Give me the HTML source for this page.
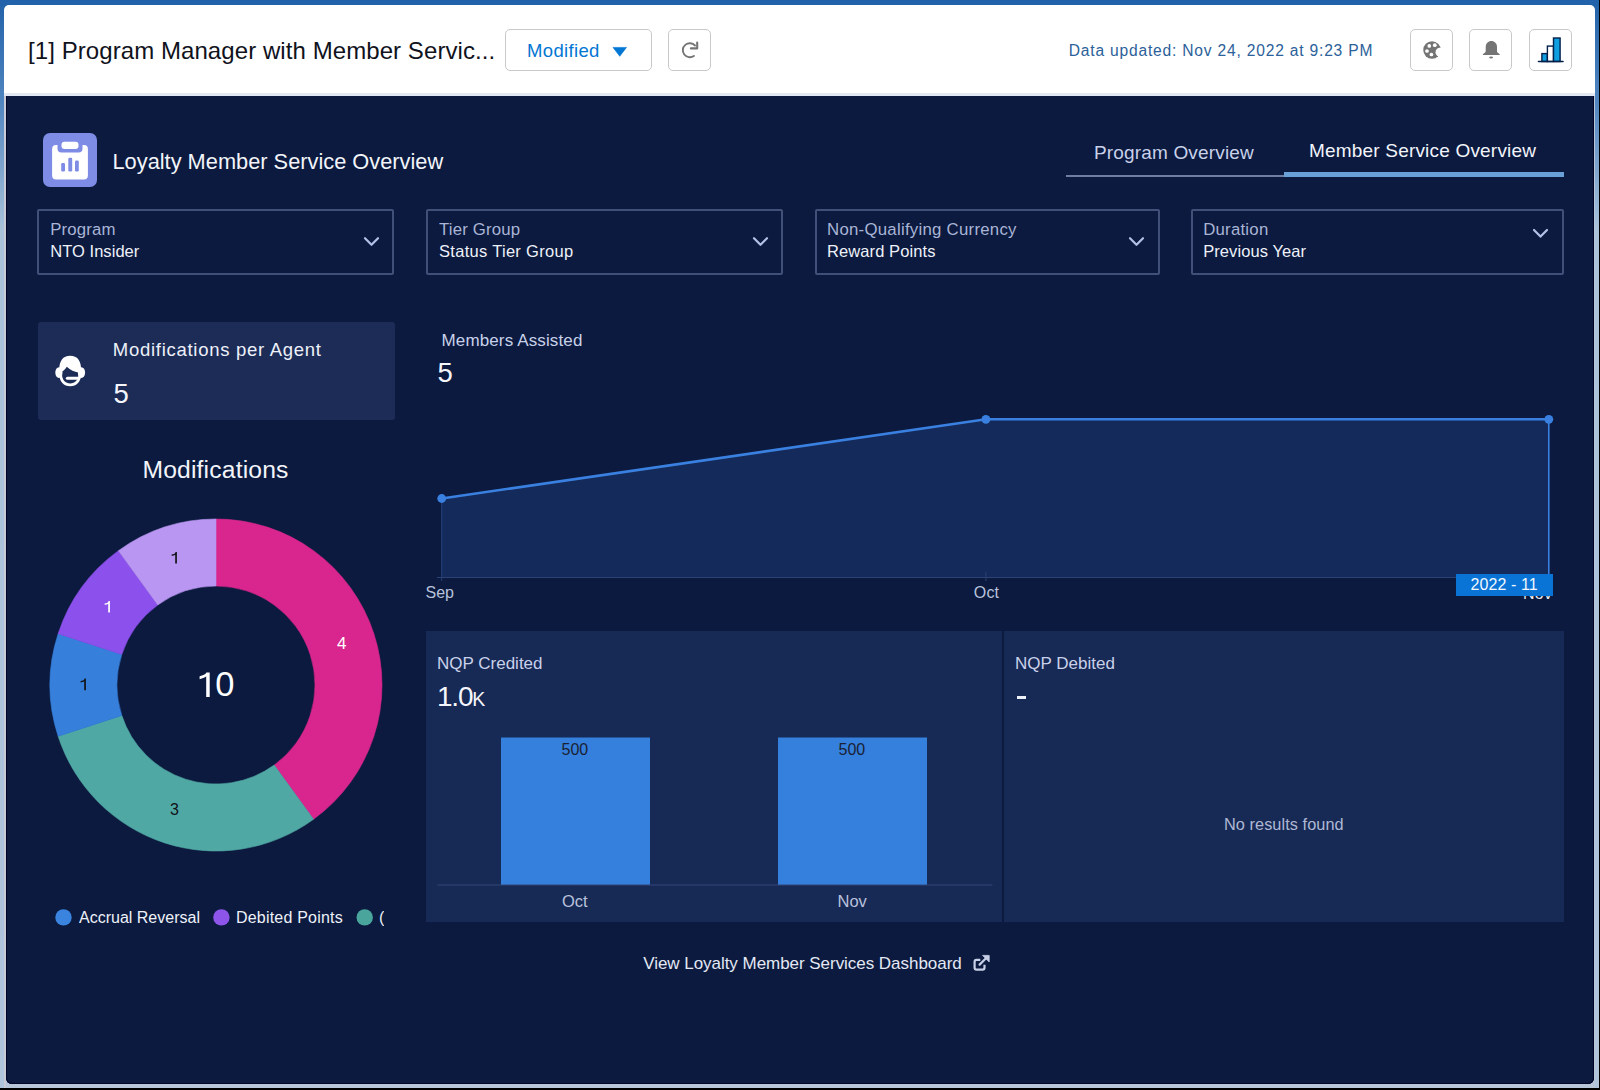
<!DOCTYPE html>
<html><head><meta charset="utf-8">
<style>
*{margin:0;padding:0;box-sizing:border-box}
html,body{width:1600px;height:1090px;overflow:hidden;background:#000}
body{position:relative;font-family:"Liberation Sans",sans-serif}
.a{position:absolute}
.t{position:absolute;white-space:nowrap;line-height:1}
#bgl{left:0;top:0;width:1599px;height:1088px;background:linear-gradient(#2262aa 0,#4f84bf 100px,#a9c2da 230px,#b0c4dc 1088px)}
#bgtop{left:0;top:0;width:1599px;height:6px;background:#2262aa}
#frame{left:4px;top:95px;width:1591px;height:993px;background:linear-gradient(90deg,#c8cad6 0,#c8cad6 2px,#b8c6da 2px)}
#hdr{left:4px;top:5px;width:1591px;height:88px;background:#fff;border-radius:5px 5px 0 0}
#hline{left:4px;top:93px;width:1591px;height:3px;background:#e3e9f3}
#panel{left:6px;top:96px;width:1588px;height:988px;background:#0b1a3e;border-radius:0 0 6px 6px;box-shadow:inset 1px 0 0 #000428, inset -1px 0 0 #000428, inset 0 -1px 0 #000428}
.btn{position:absolute;top:29px;height:42px;border:1px solid #c9c9c9;border-radius:5px;background:#fff}
.fbox{position:absolute;top:209px;height:65.6px;border:2px solid #415079;border-radius:2px}
.card{position:absolute;background:#172955}
</style></head>
<body>

<div class="a" id="bgl"></div>
<div class="a" id="bgtop"></div>
<div class="a" id="frame"></div>
<div class="a" id="hdr"></div>
<div class="a" id="hline"></div>
<div class="a" id="panel"></div>
<div class="btn" style="left:505px;width:147px"></div>
<div class="btn" style="left:668px;width:43px"></div>
<div class="btn" style="left:1410px;width:43px"></div>
<div class="btn" style="left:1469px;width:43px"></div>
<div class="btn" style="left:1529px;width:43px"></div>
<div class="a" style="left:43px;top:133px;width:54px;height:54px;border-radius:7px;background:#7f8ce6"></div>
<div class="a" style="left:1066px;top:175px;width:218px;height:2px;background:#6f7da2"></div>
<div class="a" style="left:1284px;top:172px;width:280px;height:5px;background:#6aa0d8"></div>
<div class="fbox" style="left:37.3px;width:357px"></div>
<div class="fbox" style="left:426px;width:357px"></div>
<div class="fbox" style="left:815px;width:345px"></div>
<div class="fbox" style="left:1190.8px;width:373.2px"></div>
<div class="card" style="left:38px;top:322.3px;width:356.5px;height:97.6px;border-radius:3px;background:#1c2c57"></div>
<div class="card" style="left:426px;top:631px;width:576px;height:291px"></div>
<div class="card" style="left:1004px;top:631px;width:560px;height:291px"></div>


<svg class="a" style="left:0;top:0" width="1600" height="1090" viewBox="0 0 1600 1090">
<path d="M216.00,519.00 A166,166 0 0 1 313.57,819.30 L274.19,765.09 A99,99 0 0 0 216.00,586.00 Z" fill="#d9268f" stroke="#d9268f" stroke-width="0.6" stroke-linejoin="round"/>
<path d="M313.57,819.30 A166,166 0 0 1 58.12,736.30 L121.85,715.59 A99,99 0 0 0 274.19,765.09 Z" fill="#50a8a4" stroke="#50a8a4" stroke-width="0.6" stroke-linejoin="round"/>
<path d="M58.12,736.30 A166,166 0 0 1 58.12,633.70 L121.85,654.41 A99,99 0 0 0 121.85,715.59 Z" fill="#3680dc" stroke="#3680dc" stroke-width="0.6" stroke-linejoin="round"/>
<path d="M58.12,633.70 A166,166 0 0 1 118.43,550.70 L157.81,604.91 A99,99 0 0 0 121.85,654.41 Z" fill="#8c50ec" stroke="#8c50ec" stroke-width="0.6" stroke-linejoin="round"/>
<path d="M118.43,550.70 A166,166 0 0 1 216.00,519.00 L216.00,586.00 A99,99 0 0 0 157.81,604.91 Z" fill="#b996f2" stroke="#b996f2" stroke-width="0.6" stroke-linejoin="round"/>
<polygon points="441.7,498.5 985.9,419.3 1548.8,419.3 1548.8,577.3 441.7,577.3" fill="#142a5a"/>
<line x1="437" y1="577.5" x2="1552" y2="577.5" stroke="#2b4272" stroke-width="1"/>
<line x1="441.7" y1="498.5" x2="441.7" y2="581" stroke="#25407a" stroke-width="1"/>
<line x1="985.9" y1="572" x2="985.9" y2="581" stroke="#2b4272" stroke-width="1"/>
<polyline points="441.7,498.5 985.9,419.3 1548.8,419.3" fill="none" stroke="#3a80e0" stroke-width="2.6"/>
<line x1="1548.8" y1="419.3" x2="1548.8" y2="580" stroke="#3a80e0" stroke-width="1.6"/>
<circle cx="441.7" cy="498.5" r="4.4" fill="#3a80e0"/>
<circle cx="985.9" cy="419.3" r="4.4" fill="#3a80e0"/>
<circle cx="1548.8" cy="419.3" r="4.4" fill="#3a80e0"/>
<rect x="501" y="737.5" width="149" height="147.5" fill="#3580dd"/>
<rect x="778" y="737.5" width="149" height="147.5" fill="#3580dd"/>
<line x1="437.5" y1="885" x2="992.5" y2="885" stroke="#34467a" stroke-width="1"/>
<circle cx="63.5" cy="917.4" r="8.2" fill="#3a84e0"/>
<circle cx="221.4" cy="917.4" r="8.2" fill="#8d55ea"/>
<circle cx="364.7" cy="917.4" r="8.2" fill="#4aa59c"/>
<polyline points="365,238.2 371.5,244.79999999999998 378,238.2" fill="none" stroke="#b4c0e8" stroke-width="2.2" stroke-linecap="round" stroke-linejoin="round"/><polyline points="754,238.2 760.5,244.79999999999998 767,238.2" fill="none" stroke="#b4c0e8" stroke-width="2.2" stroke-linecap="round" stroke-linejoin="round"/><polyline points="1130,238.2 1136.5,244.79999999999998 1143,238.2" fill="none" stroke="#b4c0e8" stroke-width="2.2" stroke-linecap="round" stroke-linejoin="round"/><polyline points="1534,230 1540.5,236.6 1547,230" fill="none" stroke="#b4c0e8" stroke-width="2.2" stroke-linecap="round" stroke-linejoin="round"/>

<!-- loyalty icon -->
<rect x="52.1" y="144.9" width="35.8" height="34.6" rx="4" fill="#fff"/>
<path d="M57.5,144 L57.5,148.5 Q57.5,152.5 61.5,152.5 L78.5,152.5 Q82.5,152.5 82.5,148.5 L82.5,144 Z" fill="#7f8ce6"/>
<rect x="61.5" y="141.8" width="17" height="7.2" rx="3" fill="#fff"/>
<rect x="61.2" y="163" width="3.8" height="8.5" rx="1.2" fill="#7f8ce6"/>
<rect x="68.3" y="157.8" width="3.9" height="13.7" rx="1.2" fill="#7f8ce6"/>
<rect x="75" y="160.5" width="3.8" height="11" rx="1.2" fill="#7f8ce6"/>
<!-- agent icon -->
<g fill="#fff">
<ellipse cx="58.9" cy="372.6" rx="3.6" ry="5.3"/>
<ellipse cx="81.5" cy="372.6" rx="3.6" ry="5.3"/>
<path fill-rule="evenodd" d="M59.2,371.5 C59,360.5 63,355.8 70.2,355.8 C77.4,355.8 81.4,360.5 81.2,371.5 L81.2,374 C81.2,381.5 76.5,386.3 70.2,386.3 C63.9,386.3 59.2,381.5 59.2,374 Z M62,371.5 L62,374 C62,380 65.5,383.5 70.2,383.5 C74.9,383.5 78.4,380 78.4,374 L78.4,372.6 C74.5,372 70.5,370 66.8,366.8 C65.5,369 64,370.6 62,371.5 Z"/>
<path d="M67.4,378.3 L78.6,378.3" stroke="#fff" stroke-width="3.1" stroke-linecap="round" fill="none"/>
</g>
<!-- palette -->
<circle cx="1432" cy="50" r="8.75" fill="#747474"/>
<circle cx="1439.9" cy="52.2" r="4.4" fill="#fff"/>
<circle cx="1429.3" cy="45.9" r="1.85" fill="#fff"/>
<circle cx="1434.8" cy="45.2" r="1.9" fill="#fff"/>
<circle cx="1427" cy="51" r="1.85" fill="#fff"/>
<circle cx="1431.4" cy="54.5" r="1.85" fill="#fff"/>
<!-- bell -->
<path d="M1485.7,53 L1485.7,47 C1485.7,43.5 1488.2,41 1491.35,41 C1494.5,41 1497,43.5 1497,47 L1497,53 Z" fill="#747474"/>
<path d="M1482.7,54.9 C1482.7,53.6 1485.4,53.2 1485.9,51.5 L1496.8,51.5 C1497.3,53.2 1499.9,53.6 1499.9,54.9 Z" fill="#747474"/>
<ellipse cx="1491.1" cy="57.5" rx="1.9" ry="0.95" fill="#747474"/>
<!-- chart icon -->
<g stroke="#03204a" stroke-width="1.4">
<rect x="1541.9" y="53.6" width="5.5" height="7.9" fill="#0e9fe0"/>
<rect x="1547.4" y="46.1" width="6.1" height="15.4" fill="#fff"/>
<rect x="1553.5" y="38" width="6.6" height="23.5" fill="#0e9fe0"/>
<line x1="1538.5" y1="61.5" x2="1563" y2="61.5" stroke-width="1.6" stroke-linecap="round"/>
</g>
<!-- refresh -->
<path d="M693.9,55.9 A7,7 0 1 1 695.0,45.5" fill="none" stroke="#747474" stroke-width="1.9" stroke-linecap="round"/>
<path d="M690.9,48.4 L697.2,48.4 L697.2,42.6" fill="none" stroke="#747474" stroke-width="2.1" stroke-linecap="round" stroke-linejoin="round"/>
<!-- external link -->
<path d="M980.3,959.9 L976.4,959.9 Q974.6,959.9 974.6,961.7 L974.6,967.8 Q974.6,969.6 976.4,969.6 L982.7,969.6 Q984.5,969.6 984.5,967.8 L984.5,964.8" fill="none" stroke="#c8d0e8" stroke-width="2.2"/>
<path d="M979.6,964.6 L986.5,957.7" stroke="#c8d0e8" stroke-width="2.2" stroke-linecap="round"/>
<path d="M982.6,955.4 L989.2,955.4 L989.2,962 Z" fill="#c8d0e8" stroke="#c8d0e8" stroke-width="0.8" stroke-linejoin="round"/>

<path d="M176.90,563.6 L176.90,552.00 L175.60,552.00 C175.10,553.80 173.40,554.40 171.60,554.50 L171.60,555.80 C173.00,555.80 174.30,555.30 175.20,554.70 L175.20,563.6 Z" fill="#111318"/>
<path d="M109.90,612.6 L109.90,601.00 L108.60,601.00 C108.10,602.80 106.40,603.40 104.60,603.50 L104.60,604.80 C106.00,604.80 107.30,604.30 108.20,603.70 L108.20,612.6 Z" fill="#ffffff"/>
<path d="M85.90,690.2 L85.90,678.60 L84.60,678.60 C84.10,680.40 82.40,681.00 80.60,681.10 L80.60,682.40 C82.00,682.40 83.30,681.90 84.20,681.30 L84.20,690.2 Z" fill="#111318"/>
<path d="M206.2,697 L206.2,672.6 L209.7,672.6 L209.7,697 Z M206.6,672.6 L209.2,672.6 C208,676.3 203.5,678.6 199.6,679.2 L199.6,676.2 C203,675.6 205.5,674.2 206.6,672.6 Z" fill="#fff"/>
<!-- caret -->
<polygon points="613,47.4 626.5,47.4 619.75,56.3" fill="#0176d3" stroke="#0176d3" stroke-width="0.6" stroke-linejoin="round"/>
</svg>

<div class="t" style="left:28.00px;top:38.68px;font-size:24px;color:#10121c;letter-spacing:0.075px;">[1] Program Manager with Member Servic...</div>
<div class="t" style="left:527.00px;top:42.14px;font-size:18.5px;color:#0176d3;letter-spacing:0.35px;">Modified</div>
<div class="t" style="left:1068.80px;top:42.99px;font-size:15.6px;color:#2c6199;letter-spacing:0.8px;">Data updated: Nov 24, 2022 at 9:23 PM</div>
<div class="t" style="left:112.50px;top:151.05px;font-size:21.8px;color:#f2f4fa;">Loyalty Member Service Overview</div>
<div class="t" style="left:1094.00px;top:142.72px;font-size:19px;color:#c9d1ea;letter-spacing:0.16px;">Program Overview</div>
<div class="t" style="left:1309.00px;top:141.22px;font-size:19px;color:#f2f4fb;letter-spacing:0.19px;">Member Service Overview</div>
<div class="t" style="left:50.20px;top:222.28px;font-size:16.8px;color:#a9b4d6;letter-spacing:0.15px;">Program</div>
<div class="t" style="left:50.20px;top:243.23px;font-size:16.5px;color:#eef1f9;letter-spacing:0.05px;">NTO Insider</div>
<div class="t" style="left:439.00px;top:222.28px;font-size:16.8px;color:#a9b4d6;letter-spacing:0.18px;">Tier Group</div>
<div class="t" style="left:439.00px;top:243.23px;font-size:16.5px;color:#eef1f9;letter-spacing:0.3px;">Status Tier Group</div>
<div class="t" style="left:827.00px;top:222.28px;font-size:16.8px;color:#a9b4d6;letter-spacing:0.26px;">Non-Qualifying Currency</div>
<div class="t" style="left:827.00px;top:243.23px;font-size:16.5px;color:#eef1f9;letter-spacing:0.09px;">Reward Points</div>
<div class="t" style="left:1203.20px;top:222.28px;font-size:16.8px;color:#a9b4d6;letter-spacing:0.23px;">Duration</div>
<div class="t" style="left:1203.20px;top:243.23px;font-size:16.5px;color:#eef1f9;letter-spacing:0.08px;">Previous Year</div>
<div class="t" style="left:112.80px;top:340.84px;font-size:18.5px;color:#eef1f9;letter-spacing:0.72px;">Modifications per Agent</div>
<div class="t" style="left:113.50px;top:380.32px;font-size:27.5px;color:#f5f6fb;">5</div>
<div class="t" style="left:142.50px;top:458.09px;font-size:24.7px;color:#f2f4fa;letter-spacing:0.15px;">Modifications</div>
<div class="t" style="left:441.50px;top:331.91px;font-size:17px;color:#c9d1ea;letter-spacing:0.13px;">Members Assisted</div>
<div class="t" style="left:437.50px;top:358.72px;font-size:27.5px;color:#f5f6fb;">5</div>
<div class="t" style="left:425.50px;top:584.76px;font-size:16px;color:#b9c2dc;">Sep</div>
<div class="t" style="left:973.80px;top:584.96px;font-size:16px;color:#b9c2dc;letter-spacing:0.15px;">Oct</div>
<div class="t" style="left:1523.00px;top:586.46px;font-size:16px;color:#e6eaf3;letter-spacing:0.3px;">Nov</div>
<div class="a" style="left:1456px;top:574px;width:97px;height:22px;background:#0a74d6"></div>
<div class="t" style="left:1470.40px;top:577.26px;font-size:16px;color:#f0f7ff;letter-spacing:0.1px;">2022 - 11</div>
<div class="t" style="left:437.00px;top:654.61px;font-size:17px;color:#c9d1ea;">NQP Credited</div>
<div class="t" style="left:437.00px;top:682.50px;font-size:28px;color:#f5f6fb;letter-spacing:-1.2px;">1.0<span style="font-size:19.5px;letter-spacing:0">K</span></div>
<div class="t" style="left:1015.00px;top:654.61px;font-size:17px;color:#c9d1ea;">NQP Debited</div>
<div class="a" style="left:1016.5px;top:696.3px;width:9.3px;height:2.6px;background:#eef1f9"></div>
<div class="t" style="left:1224.00px;top:815.80px;font-size:16.3px;color:#aeb8d4;letter-spacing:0.07px;">No results found</div>
<div class="t" style="left:561.50px;top:741.76px;font-size:16px;color:#1a1f33;">500</div>
<div class="t" style="left:838.50px;top:741.76px;font-size:16px;color:#1a1f33;">500</div>
<div class="t" style="left:562.00px;top:893.03px;font-size:16.5px;color:#b9c2dc;">Oct</div>
<div class="t" style="left:837.50px;top:893.03px;font-size:16.5px;color:#b9c2dc;">Nov</div>
<div class="t" style="left:79.00px;top:910.26px;font-size:16px;color:#eef1f9;">Accrual Reversal</div>
<div class="t" style="left:236.00px;top:910.26px;font-size:16px;color:#eef1f9;letter-spacing:0.2px;">Debited Points</div>
<div class="a" style="left:378px;top:905px;width:6px;height:25px;overflow:hidden"><div class="t" style="left:1px;top:4.5px;font-size:16px;color:#eef1f9">(</div></div>
<div class="t" style="left:643.20px;top:955.21px;font-size:17px;color:#e3e8f4;letter-spacing:-0.04px;">View Loyalty Member Services Dashboard</div>
<div class="t" style="left:215.30px;top:667.20px;font-size:34.5px;color:#ffffff;">0</div>
<div class="t" style="left:337.00px;top:634.61px;font-size:17px;color:#ffffff;">4</div>
<div class="t" style="left:170.00px;top:802.46px;font-size:16px;color:#111318;">3</div>

</body></html>
